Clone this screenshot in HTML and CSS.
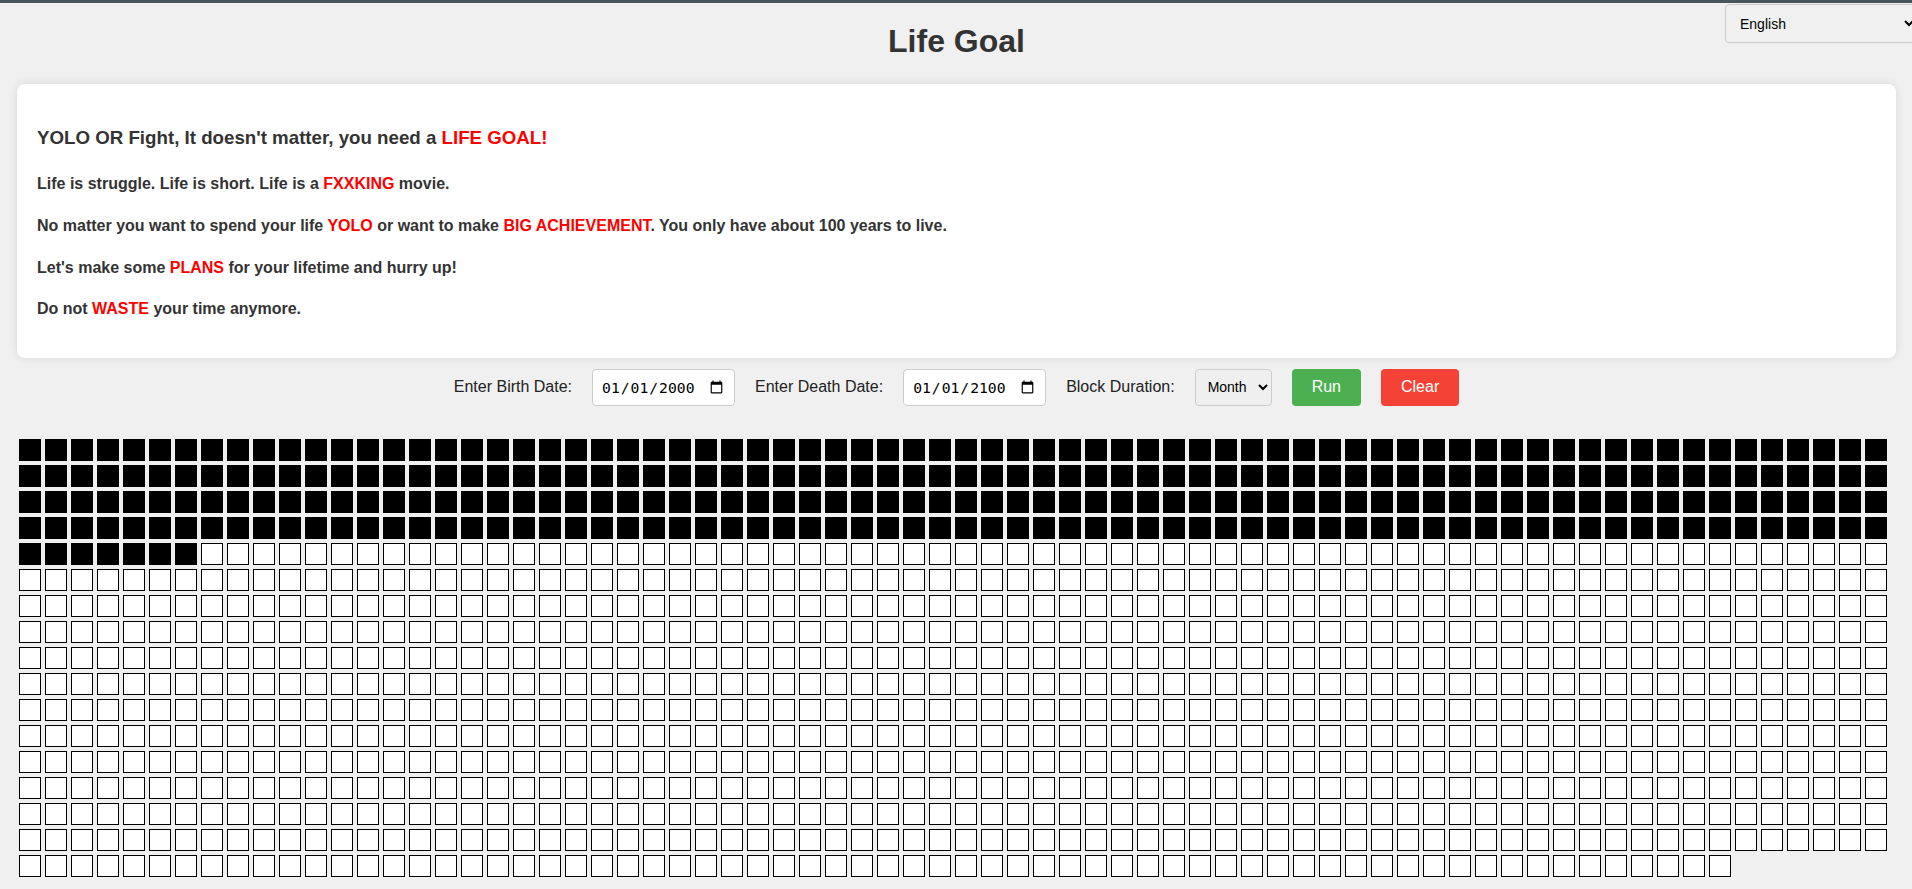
FILE: index.html
```html
<!DOCTYPE html>
<html lang="en">
<head>
<meta charset="utf-8">
<title>Life Goal</title>
<link rel="stylesheet" href="styles.css">
</head>
<body>
<div class="topbar"></div>
<select class="lang">
  <option>English</option>
  <option>中文</option>
</select>
<h1 class="title">Life Goal</h1>
<div class="card">
  <h3 class="card-head">YOLO OR Fight, It doesn't matter, you need a <span class="hl">LIFE GOAL!</span></h3>
  <p class="card-line">Life is struggle. Life is short. Life is a <span class="hl">FXXKING</span> movie.</p>
  <p class="card-line">No matter you want to spend your life <span class="hl">YOLO</span> or want to make <span class="hl">BIG ACHIEVEMENT</span>. You only have about 100 years to live.</p>
  <p class="card-line">Let's make some <span class="hl">PLANS</span> for your lifetime and hurry up!</p>
  <p class="card-line">Do not <span class="hl">WASTE</span> your time anymore.</p>
</div>
<div class="controls">
  <label class="ctl-label" for="birth">Enter Birth Date:</label>
  <input class="date" id="birth" type="date" value="2000-01-01">
  <label class="ctl-label" for="death">Enter Death Date:</label>
  <input class="date" id="death" type="date" value="2100-01-01">
  <label class="ctl-label" for="dur">Block Duration:</label>
  <select class="dur" id="dur">
    <option>Month</option>
    <option>Week</option>
    <option>Year</option>
  </select>
  <button class="btn btn-run">Run</button>
  <button class="btn btn-clear">Clear</button>
</div>
<div class="grid" id="grid"></div>
<script src="script.js"></script>
</body>
</html>
```
FILE: styles.css
```css
html {
  overflow: hidden;
}
body {
  margin: 0;
  padding: 0 16px 0 17px;
  background: #f0f0f0;
  font-family: "Liberation Sans", Arial, sans-serif;
  color: #333;
  line-height: 1.6;
}
.topbar {
  height: 3px;
  background: #47555e;
  margin: 0 -16px 0 -17px;
}
.lang {
  position: absolute;
  top: 4px;
  right: -6px;
  width: 193px;
  height: 39px;
  padding: 0 4px 0 10px;
  font-family: "Liberation Sans", Arial, sans-serif;
  font-size: 14px;
  color: #000;
  background: #f0f0f0;
  border: 1px solid #ccc;
  border-radius: 4px;
}
.title {
  margin: 20px 0 24px;
  font-size: 32px;
  line-height: normal;
  font-weight: bold;
  text-align: center;
  color: #333;
}
.card {
  background: #fff;
  border-radius: 8px;
  padding: 20px;
  box-shadow: 0 0 10px rgba(0, 0, 0, 0.1);
}
.card-head {
  margin: 18.72px 0;
  font-size: 18.72px;
}
.card-line {
  margin: 16px 0;
  font-size: 16px;
  font-weight: bold;
}
.hl {
  color: #ff0000;
}
.controls {
  margin-top: 11px;
  display: flex;
  justify-content: center;
  align-items: center;
  gap: 20px;
}
.ctl-label {
  font-size: 16px;
  color: #222;
}
.date {
  box-sizing: border-box;
  width: 143px;
  height: 37px;
  padding: 0 8px;
  font-family: "DejaVu Sans Mono", monospace;
  font-size: 14.7px;
  color: #000;
  background: #fff;
  border: 1px solid #ccc;
  border-radius: 4px;
}
.dur {
  box-sizing: border-box;
  width: 77px;
  height: 37px;
  padding: 0 4px 0 8px;
  font-family: "Liberation Sans", Arial, sans-serif;
  font-size: 14px;
  color: #000;
  background: #efefef;
  border: 1px solid #ccc;
  border-radius: 4px;
}
.btn {
  height: 37px;
  padding: 0 20px;
  font-family: "Liberation Sans", Arial, sans-serif;
  font-size: 16px;
  color: #fff;
  border: none;
  border-radius: 4px;
}
.btn-run {
  background: #4caf50;
}
.btn-clear {
  background: #f44336;
}
.grid {
  margin-top: 31px;
  display: flex;
  flex-wrap: wrap;
  line-height: 0;
}
.block {
  width: 20px;
  height: 20px;
  margin: 2px;
  border: 1px solid #000;
  background: #fff;
}
.block.filled {
  background: #000;
}
```
FILE: script.js
```js
var grid = document.getElementById('grid');
var total = 1218;
var passed = 295;
for (var i = 0; i < total; i++) {
  var b = document.createElement('div');
  b.className = i < passed ? 'block filled' : 'block';
  grid.appendChild(b);
}
```
